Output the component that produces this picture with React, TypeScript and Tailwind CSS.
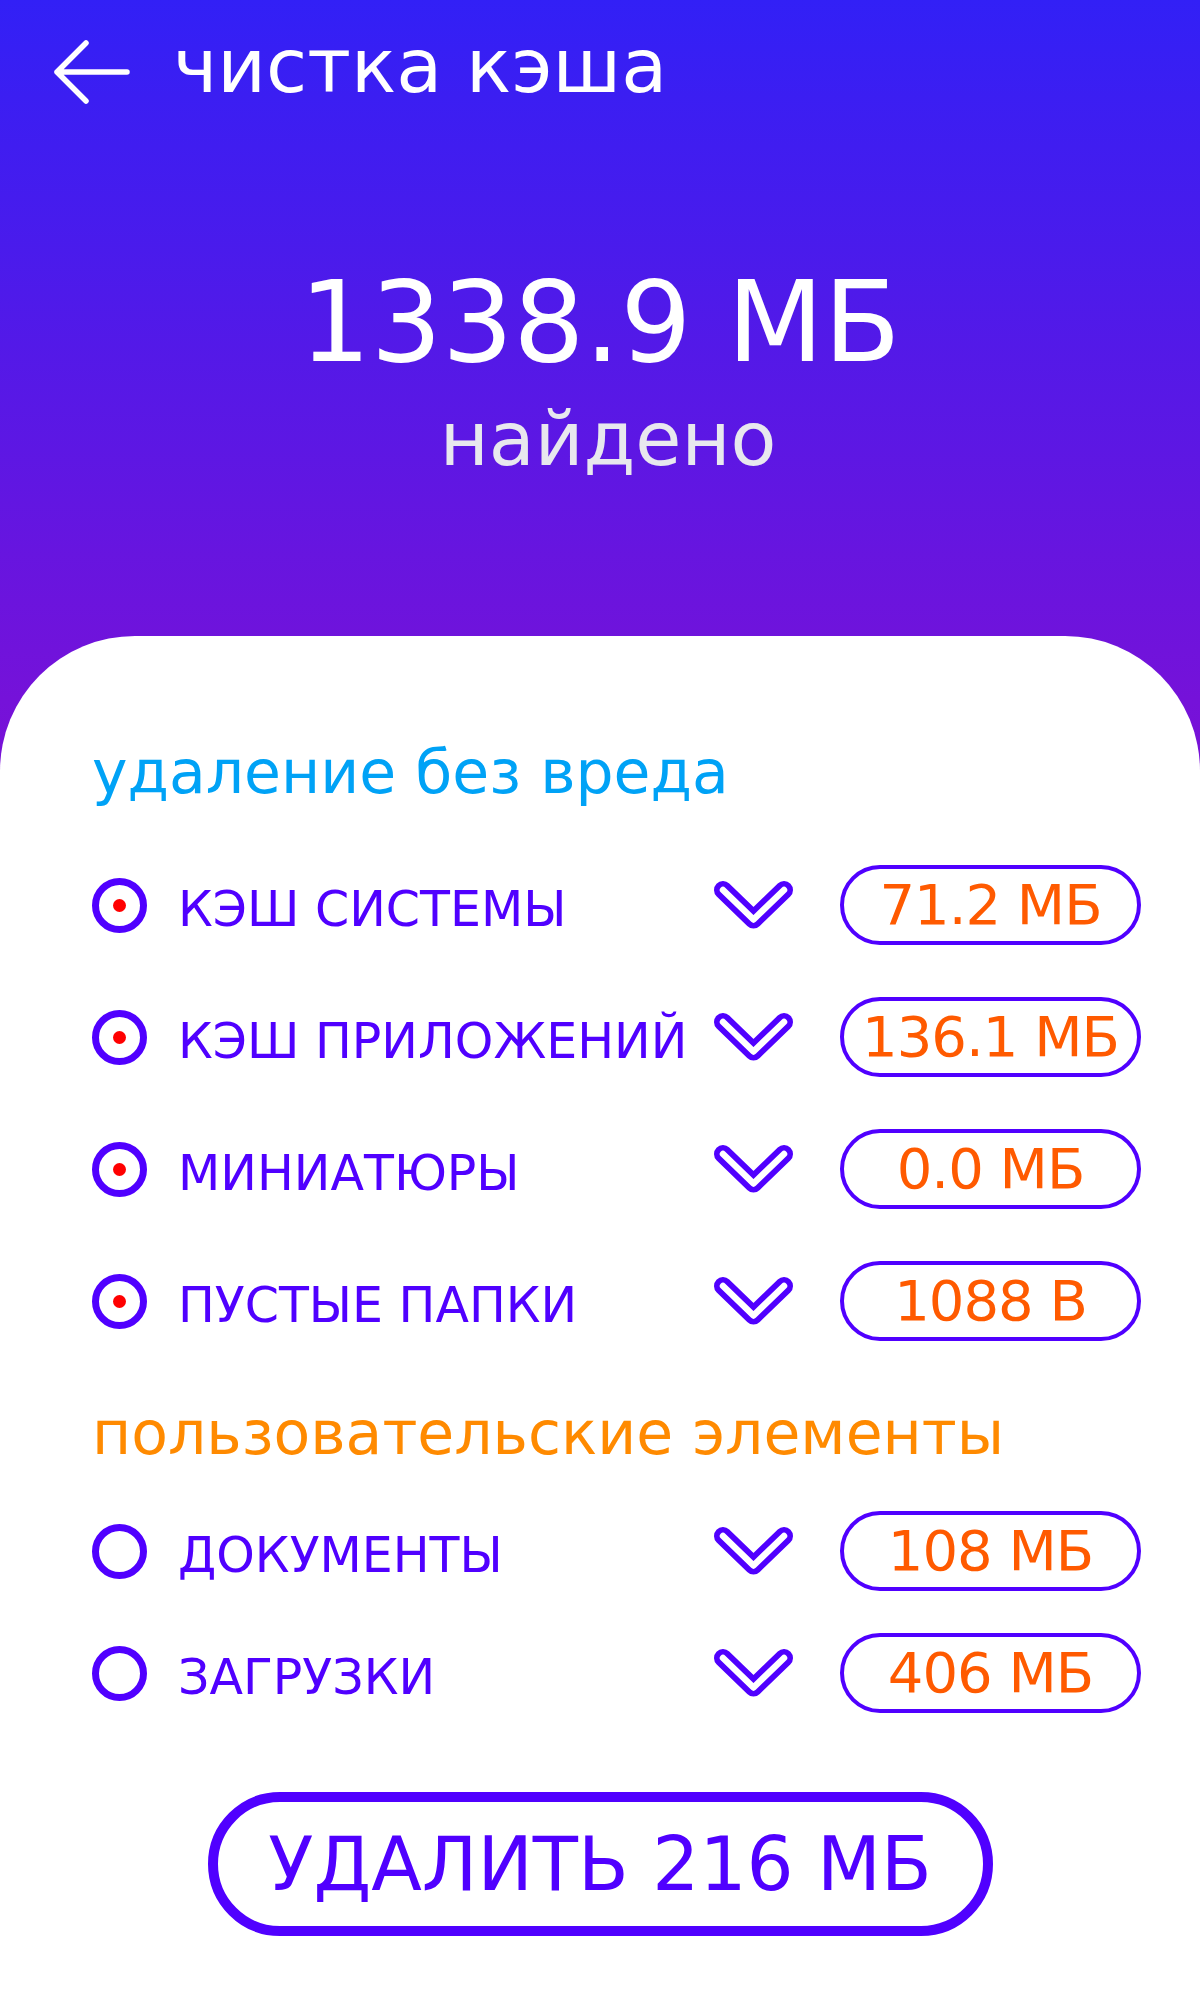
import React from "react";

type Item = { label: string; size: string; checked: boolean };

const safeItems: Item[] = [
  { label: "КЭШ СИСТЕМЫ", size: "71.2 МБ", checked: true },
  { label: "КЭШ ПРИЛОЖЕНИЙ", size: "136.1 МБ", checked: true },
  { label: "МИНИАТЮРЫ", size: "0.0 МБ", checked: true },
  { label: "ПУСТЫЕ ПАПКИ", size: "1088 B", checked: true },
];

const userItems: Item[] = [
  { label: "ДОКУМЕНТЫ", size: "108 МБ", checked: false },
  { label: "ЗАГРУЗКИ", size: "406 МБ", checked: false },
];

function BackArrow() {
  return (
    <svg width="77" height="64" viewBox="0 0 77 64" fill="none" className="shrink-0">
      <path
        d="M74 32H4M33 3L4 32L33 61"
        stroke="#ffffff"
        strokeWidth="5.5"
        strokeLinecap="round"
        strokeLinejoin="round"
      />
    </svg>
  );
}

function Chevron() {
  return (
    <svg width="79" height="48" viewBox="0 0 79 48" fill="none" className="shrink-0">
      <path d="M9 9L39.5 38.5L70 9" stroke="#5000ff" strokeWidth="18" strokeLinecap="round" strokeLinejoin="round" />
      <path d="M9 9L39.5 38.5L70 9" stroke="#ffffff" strokeWidth="6.5" strokeLinecap="round" strokeLinejoin="round" />
    </svg>
  );
}

function Row({ item }: { item: Item }) {
  return (
    <div className="flex items-center h-[80px]">
      <div className="w-[55px] h-[55px] shrink-0 rounded-full border-[7px] border-[#5000ff] flex items-center justify-center">
        {item.checked && <div className="w-[13px] h-[13px] rounded-full bg-[#ff0000]" />}
      </div>
      <div className="flex-1 ml-[31px] pt-[8px] text-[49px] leading-none text-[#5000ff] whitespace-nowrap">
        {item.label}
      </div>
      <Chevron />
      <div className="ml-[47px] w-[301px] h-[80px] shrink-0 rounded-full border-[4px] border-[#5000ff] flex items-center justify-center text-[56px] leading-none tracking-[-1px] text-[#ff5a00]">
        {item.size}
      </div>
    </div>
  );
}

export default function App() {
  return (
    <div
      className="min-h-[2000px] flex flex-col bg-[linear-gradient(180deg,#3220f6_0px,#7512d9_700px,#7a10d6_800px)]"
      style={{ fontFamily: '"DejaVu Sans", "Noto Sans", sans-serif' }}
    >
      <header className="flex items-center gap-[43px] pl-[53px] pt-[40px] h-[104px]">
        <BackArrow />
        <h1 className="text-[75px] leading-none text-white font-normal -mt-[12px]">чистка кэша</h1>
      </header>

      <div className="mt-[162px] text-center text-[112px] leading-none text-white">1338.9 МБ</div>
      <div className="mt-[24px] pl-[16px] text-center text-[75px] leading-none text-[#e8e8ee]">найдено</div>

      <main className="mt-[159px] flex-1 bg-white rounded-t-[135px] pt-[106px] pl-[92px] pr-[59px]">
        <h2 className="text-[60px] leading-none text-[#00a2f6]">удаление без вреда</h2>
        <div className="mt-[63px] flex flex-col gap-[52px]">
          {safeItems.map((it) => (
            <Row key={it.label} item={it} />
          ))}
        </div>

        <h2 className="mt-[62px] text-[60px] leading-none text-[#ff8a00]">пользовательские элементы</h2>
        <div className="mt-[48px] flex flex-col gap-[42px]">
          {userItems.map((it) => (
            <Row key={it.label} item={it} />
          ))}
        </div>

        <div className="mt-[79px] -ml-[33px] flex justify-center">
          <button className="w-[785px] h-[144px] rounded-full border-[10px] border-[#5000ff] bg-white text-[74px] leading-none text-[#5000ff]">
            УДАЛИТЬ 216 МБ
          </button>
        </div>
      </main>
    </div>
  );
}
